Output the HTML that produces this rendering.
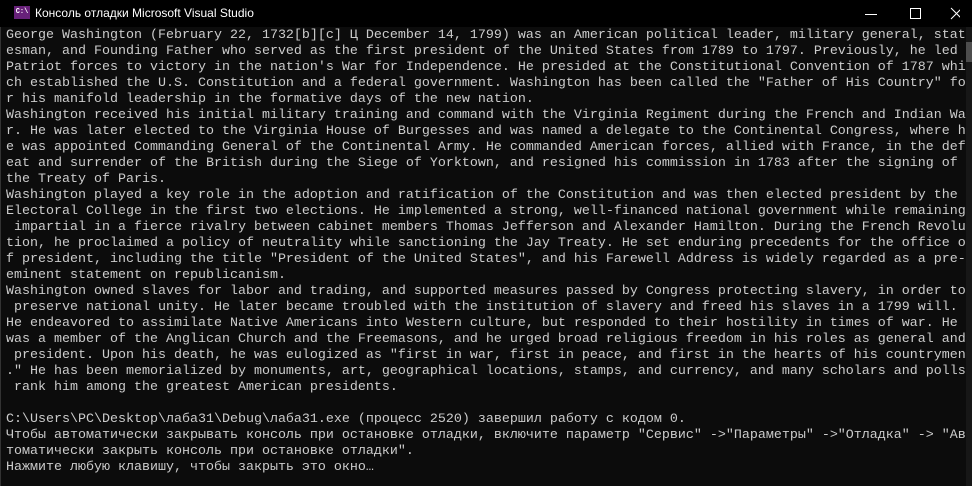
<!DOCTYPE html>
<html><head><meta charset="utf-8"><style>
body{margin:0;width:972px;height:486px;background:#0c0c0c;overflow:hidden;position:relative}
#tb{position:absolute;left:0;top:0;width:972px;height:27px;background:#000;color:#fff;font:12px "Liberation Sans","Noto Sans CJK SC",sans-serif}
#tb .t{position:absolute;left:35px;top:6px}
#ic{position:absolute;left:14px;top:6px;width:16px;height:13px;background:#68217a;color:#fff;font:bold 7px "Liberation Mono",monospace;line-height:13px;text-align:center}
#con{position:absolute;left:6px;top:28px;width:960px;color:#cccccc;font:13.33px/16px "Liberation Mono","DejaVu Sans Mono",monospace;white-space:pre}
#sb{position:absolute;left:966px;top:27px;width:6px;height:459px;background:#171717}
#th{position:absolute;left:966px;top:42px;width:6px;height:20px;background:#4d4d4d}
#lb{position:absolute;left:0;top:27px;width:1px;height:459px;background:#333}
</style></head><body>
<div id="tb"><div id="ic">C:\</div><span class="t">Консоль отладки Microsoft Visual Studio</span>
<svg style="position:absolute;left:860px;top:6px" width="100" height="16"><path d="M5 8.5H17" stroke="#fff" stroke-width="1"/><rect x="50.5" y="2.5" width="10" height="10" fill="none" stroke="#fff"/><path d="M91 2L102 13M102 2L91 13" stroke="#fff"/></svg></div>
<div id="lb"></div><div id="sb"></div><div id="th"></div>
<div id="con">George Washington (February 22, 1732[b][c] Ц December 14, 1799) was an American political leader, military general, stat
esman, and Founding Father who served as the first president of the United States from 1789 to 1797. Previously, he led
Patriot forces to victory in the nation's War for Independence. He presided at the Constitutional Convention of 1787 whi
ch established the U.S. Constitution and a federal government. Washington has been called the "Father of His Country" fo
r his manifold leadership in the formative days of the new nation.
Washington received his initial military training and command with the Virginia Regiment during the French and Indian Wa
r. He was later elected to the Virginia House of Burgesses and was named a delegate to the Continental Congress, where h
e was appointed Commanding General of the Continental Army. He commanded American forces, allied with France, in the def
eat and surrender of the British during the Siege of Yorktown, and resigned his commission in 1783 after the signing of
the Treaty of Paris.
Washington played a key role in the adoption and ratification of the Constitution and was then elected president by the
Electoral College in the first two elections. He implemented a strong, well-financed national government while remaining
 impartial in a fierce rivalry between cabinet members Thomas Jefferson and Alexander Hamilton. During the French Revolu
tion, he proclaimed a policy of neutrality while sanctioning the Jay Treaty. He set enduring precedents for the office o
f president, including the title "President of the United States", and his Farewell Address is widely regarded as a pre-
eminent statement on republicanism.
Washington owned slaves for labor and trading, and supported measures passed by Congress protecting slavery, in order to
 preserve national unity. He later became troubled with the institution of slavery and freed his slaves in a 1799 will.
He endeavored to assimilate Native Americans into Western culture, but responded to their hostility in times of war. He
was a member of the Anglican Church and the Freemasons, and he urged broad religious freedom in his roles as general and
 president. Upon his death, he was eulogized as "first in war, first in peace, and first in the hearts of his countrymen
." He has been memorialized by monuments, art, geographical locations, stamps, and currency, and many scholars and polls
 rank him among the greatest American presidents.

C:\Users\PC\Desktop\лаба31\Debug\лаба31.exe (процесс 2520) завершил работу с кодом 0.
Чтобы автоматически закрывать консоль при остановке отладки, включите параметр "Сервис" -&gt;"Параметры" -&gt;"Отладка" -&gt; "Ав
томатически закрыть консоль при остановке отладки".
Нажмите любую клавишу, чтобы закрыть это окно…</div>
</body></html>
